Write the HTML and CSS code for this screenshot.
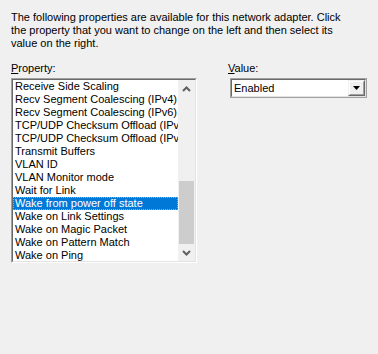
FILE: index.html
```html
<!DOCTYPE html>
<html lang="en">
<head>
<meta charset="utf-8">
<title>Advanced</title>
<link rel="stylesheet" href="styles.css">
</head>
<body>
<main class="page">
  <p class="intro">The following properties are available for this network adapter. Click<br>the property that you want to change on the left and then select its<br>value on the right.</p>
  <div class="fields">
    <div class="col-prop">
      <div class="label"><u>P</u>roperty:</div>
      <div class="listbox">
        <div class="listbox-inner">
          <ul class="items">
            <li>Receive Side Scaling</li>
            <li>Recv Segment Coalescing (IPv4)</li>
            <li>Recv Segment Coalescing (IPv6)</li>
            <li>TCP/UDP Checksum Offload (IPv4)</li>
            <li>TCP/UDP Checksum Offload (IPv6)</li>
            <li>Transmit Buffers</li>
            <li>VLAN ID</li>
            <li>VLAN Monitor mode</li>
            <li>Wait for Link</li>
            <li class="selected">Wake from power off state</li>
            <li>Wake on Link Settings</li>
            <li>Wake on Magic Packet</li>
            <li>Wake on Pattern Match</li>
            <li>Wake on Ping</li>
          </ul>
          <div class="scrollbar">
            <div class="sb-btn">
              <svg width="9" height="6" viewBox="0 0 9 6"><polyline points="1,5 4.5,1.5 8,5" fill="none" stroke="#606060" stroke-width="2"/></svg>
            </div>
            <div class="sb-track"><div class="sb-thumb"></div></div>
            <div class="sb-btn">
              <svg width="9" height="6" viewBox="0 0 9 6"><polyline points="1,1 4.5,4.5 8,1" fill="none" stroke="#606060" stroke-width="2"/></svg>
            </div>
          </div>
        </div>
      </div>
    </div>
    <div class="col-val">
      <div class="label"><u>V</u>alue:</div>
      <div class="combo">
        <div class="combo-inner">
          <span class="combo-text">Enabled</span>
          <div class="combo-btn">
            <div class="combo-btn-inner">
              <svg width="7" height="4" viewBox="0 0 7 4"><polygon points="0,0 7,0 3.5,4" fill="#000"/></svg>
            </div>
          </div>
        </div>
      </div>
    </div>
  </div>
</main>
</body>
</html>
```

FILE: styles.css
```css
html, body {
  margin: 0;
  padding: 0;
  background: #f0f0f0;
}
body {
  font-family: "Liberation Sans", Arial, sans-serif;
  font-size: 11px;
  line-height: 13px;
  color: #000;
}
.page {
  padding: 11px 0 0 11px;
}
.intro {
  margin: 0;
  white-space: nowrap;
}
.fields {
  display: flex;
  margin-top: 12px;
}
.label {
  height: 13px;
  margin-bottom: 3px;
}
.col-prop {
  width: 186px;
}
.col-val {
  margin-left: 31px;
}
.listbox {
  box-sizing: border-box;
  width: 186px;
  height: 185px;
  border: 1px solid;
  border-color: #a0a0a0 #ffffff #ffffff #a0a0a0;
}
.listbox-inner {
  box-sizing: border-box;
  height: 100%;
  border: 1px solid;
  border-color: #696969 #e3e3e3 #e3e3e3 #696969;
  background: #fff;
  display: flex;
}
.items {
  list-style: none;
  margin: 0;
  padding: 0;
  width: 165px;
  overflow: hidden;
}
.items li {
  box-sizing: border-box;
  height: 13px;
  padding-left: 2px;
  white-space: nowrap;
  overflow: hidden;
}
.items li.selected {
  background: #0078d7;
  color: #fff;
  border: 1px dotted #ff9a3c;
  padding-left: 1px;
  line-height: 11px;
}
.scrollbar {
  width: 17px;
  display: flex;
  flex-direction: column;
  background: #f0f0f0;
}
.sb-btn {
  height: 17px;
  display: flex;
  align-items: center;
  justify-content: center;
}
.sb-track {
  flex: 1;
  display: flex;
  flex-direction: column;
  justify-content: flex-end;
  align-items: center;
}
.sb-thumb {
  width: 15px;
  height: 63px;
  background: #cdcdcd;
}
.combo {
  box-sizing: border-box;
  margin-left: 2px;
  width: 137px;
  height: 20px;
  border: 1px solid;
  border-color: #a0a0a0 #a0a0a0 #a0a0a0 #a0a0a0;
}
.combo-inner {
  box-sizing: border-box;
  height: 100%;
  border: 1px solid;
  border-color: #696969 #e3e3e3 #e3e3e3 #696969;
  background: #fff;
  display: flex;
  align-items: center;
}
.combo-text {
  flex: 1;
  padding-left: 2px;
  padding-top: 1px;
}
.combo-btn {
  box-sizing: border-box;
  width: 17px;
  height: 100%;
  border: 1px solid;
  border-color: #f0f0f0 #696969 #696969 #f0f0f0;
}
.combo-btn-inner {
  box-sizing: border-box;
  height: 100%;
  border: 1px solid;
  border-color: #ffffff #a0a0a0 #a0a0a0 #ffffff;
  background: #f0f0f0;
  display: flex;
  align-items: center;
  justify-content: center;
}
```
